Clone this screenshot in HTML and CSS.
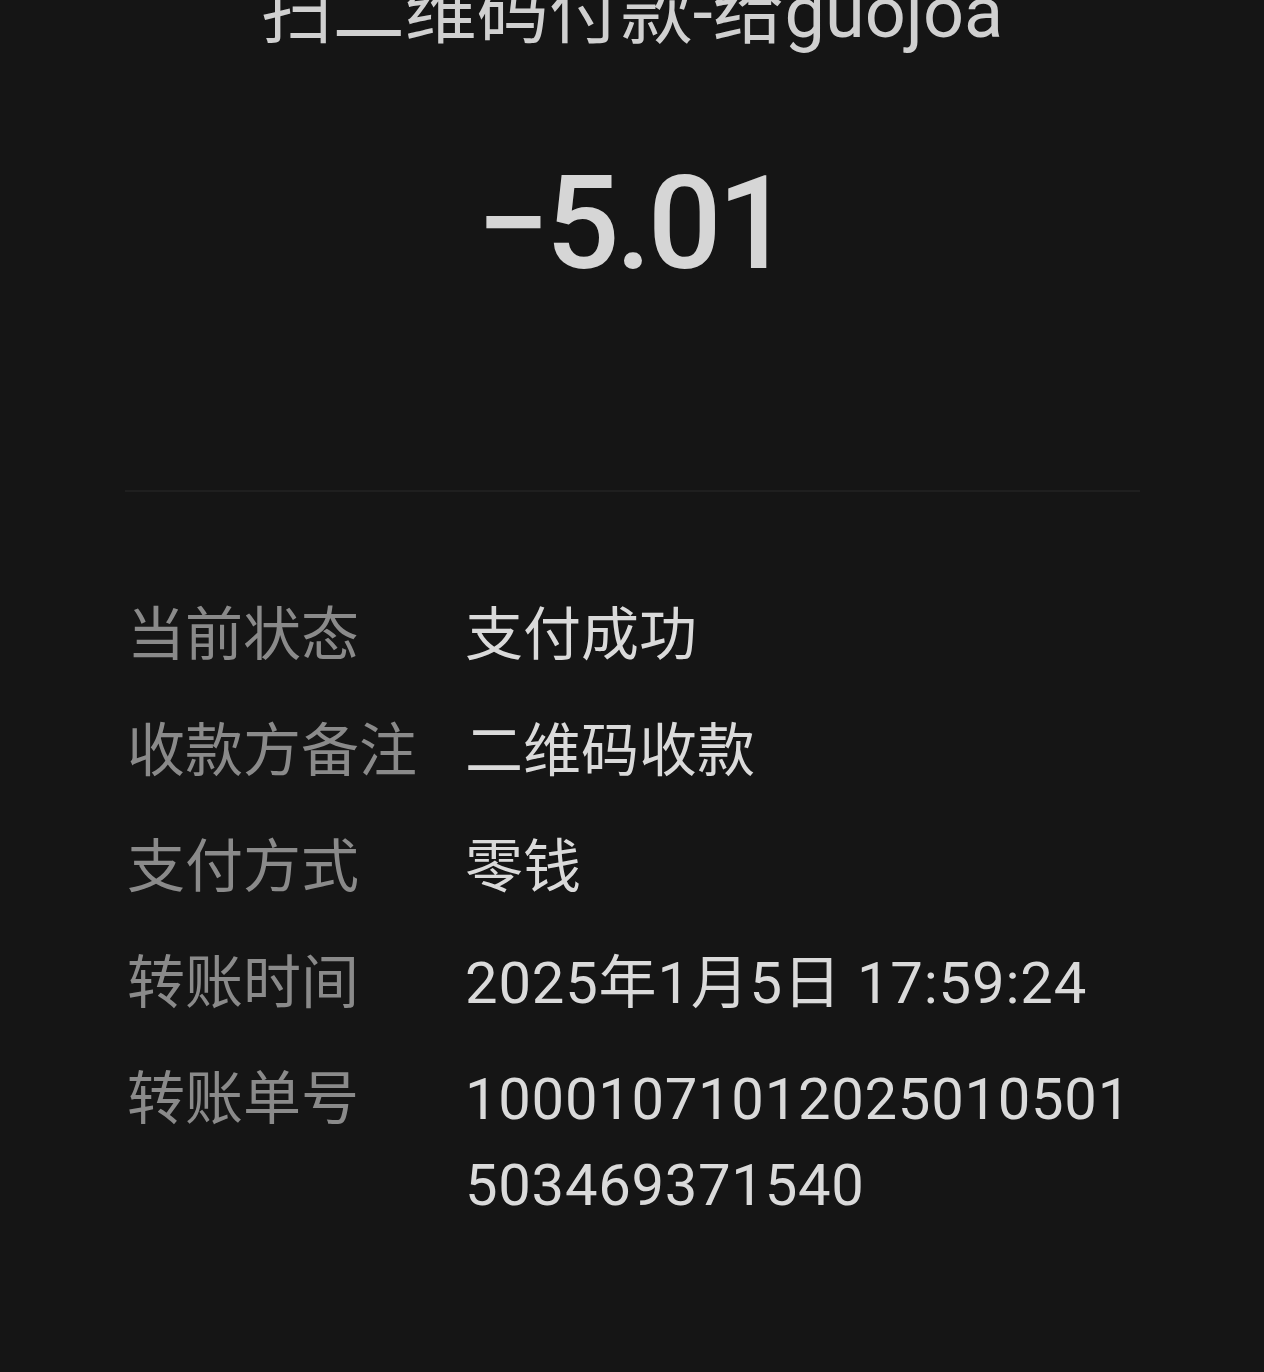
FILE: index.html
```html
<!DOCTYPE html>
<html lang="zh-CN">
<head>
<meta charset="utf-8">
<link rel="stylesheet" href="styles.css">
</head>
<body>
<div class="page">
  <div class="title">扫二维码付款-给guojoa</div>
  <div class="amount">−5.01</div>
  <div class="divider"></div>
  <div class="rows">
    <div class="label">当前状态</div>
    <div class="value">支付成功</div>
    <div class="label">收款方备注</div>
    <div class="value">二维码收款</div>
    <div class="label">支付方式</div>
    <div class="value">零钱</div>
    <div class="label">转账时间</div>
    <div class="value date">2025年1月5日 17:59:24</div>
    <div class="label">转账单号</div>
    <div class="value long">10001071012025010501503469371540</div>
  </div>
</div>
</body>
</html>
```
FILE: styles.css
```css
html, body {
  margin: 0;
  padding: 0;
  background: #151515;
}
body {
  font-family: "Roboto", "Noto Sans CJK SC", sans-serif;
  color: #d8d8d8;
  overflow: hidden;
  height: 1372px;
}
.page {
  display: flex;
  flex-direction: column;
}
.title {
  font-size: 72px;
  line-height: 80px;
  margin-top: -27px;
  text-align: center;
  color: #d0d0d0;
  white-space: nowrap;
}
.amount {
  margin-top: 101px;
  font-size: 130px;
  line-height: 140px;
  font-weight: 500;
  letter-spacing: -4px;
  text-align: center;
  color: #d6d6d6;
}
.divider {
  margin: 196px 124px 0 125px;
  height: 2px;
  background: #1f1f1f;
}
.rows {
  margin-top: 100px;
  padding: 0 124px 0 127px;
  display: grid;
  grid-template-columns: 338px 1fr;
  row-gap: 30px;
  font-size: 58px;
  line-height: 86px;
}
.label {
  color: #8a8a8a;
  white-space: nowrap;
}
.value {
  color: #dadada;
}
.date {
  letter-spacing: 0.8px;
}
.long {
  letter-spacing: 0.7px;
  word-break: break-all;
}
```
